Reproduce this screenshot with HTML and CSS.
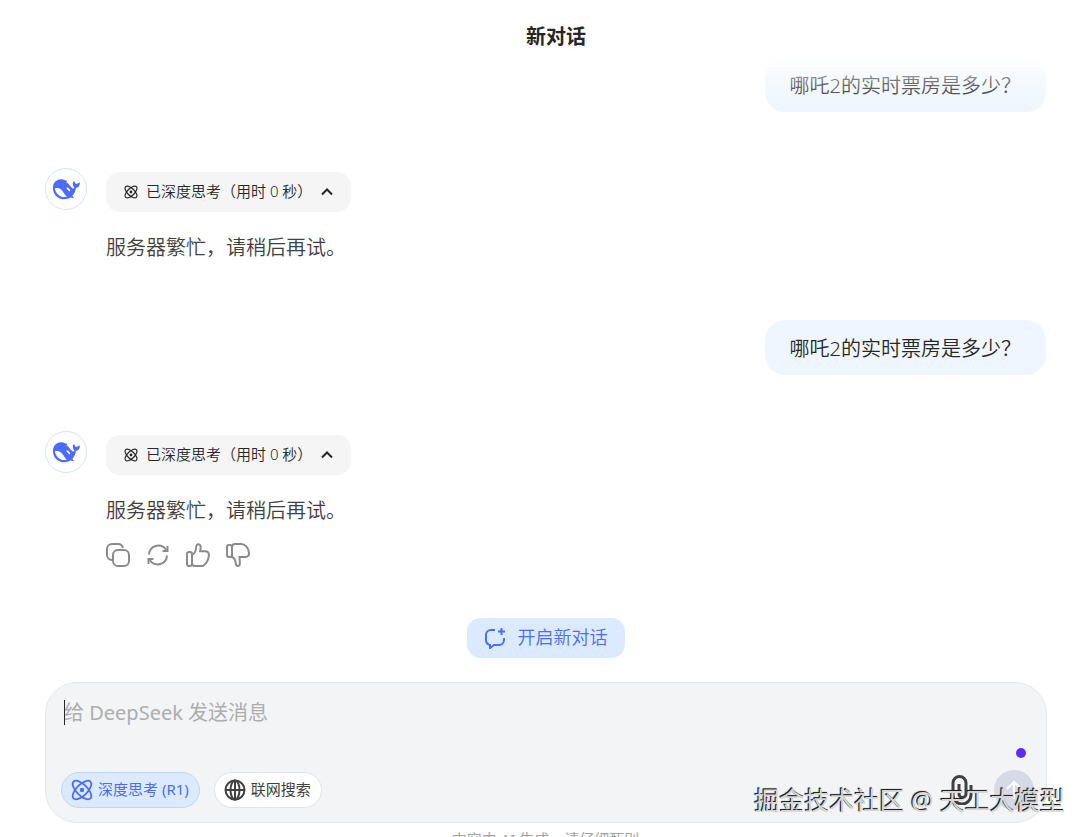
FILE: index.html
```html
<!DOCTYPE html>
<html lang="zh-CN">
<head>
<meta charset="UTF-8" />
<meta name="viewport" content="width=device-width, initial-scale=1" />
<title>新对话</title>
<link rel="stylesheet" href="styles.css">
</head>
<body>
  <!-- Shared icons -->
  <svg class="sprite" aria-hidden="true">
    <symbol id="whale" viewBox="0 0 28 24">
      <path fill="#4d6bfe" d="M13.500 3.400C8 .6 1.600 3.400 1 10c-.5 6.500 4 12 10.500 12.200 2.700.1 5-.5 6.800-1.600 1.300.5 2.700.6 3.600.2.200-.6-.9-1.100-1.600-1.900 2-2.100 3.300-4.700 3.600-7.900 2.400-.3 3.800-2.300 4-5 0-.6-.5-.7-1-.3-.9.700-2 .7-3 1.200-.8-.6-1.200-1.400-1.400-2.300-.2-.6-.8-.6-.9 0-.7 1.300-1.100 1.700-.6 3.400.2 1.100.7 1.900 1.400 2.500-.5.900-1.200 1.100-1.900.7-2.200-1.100-2.800-3.500-5-5.100-.8-.6-1.600-.7-.4-1.900-.6-.9-.9-1-1.600-.8z"/>
      <path fill="#fff" d="M3 11.300c3.300-.9 6.200.7 8.200 3.800 1.100 1.800 2 3.100 3.600 4.300-2.800 1.200-5.900.6-8.200-1.500C4.300 16.200 3 13.800 3 11.300zM14.300 10.600c1.900-.5 3.600 1 3.900 3 .1.700-.7.900-1.300.4-1-.7-2.200-1.700-2.600-3.400z"/>
    </symbol>
    <symbol id="atom" viewBox="0 0 24 24">
      <g fill="none" stroke="currentColor" stroke-width="2">
        <ellipse cx="12" cy="12" rx="13" ry="6" transform="rotate(45 12 12)"/>
        <ellipse cx="12" cy="12" rx="13" ry="6" transform="rotate(-45 12 12)"/>
      </g>
      <circle cx="12" cy="12" r="2.400" fill="currentColor"/>
    </symbol>
    <symbol id="chevron" viewBox="0 0 12 12">
      <path d="M1 8.500 6 3.500l5 5" fill="none" stroke="currentColor" stroke-width="2"/>
    </symbol>
  </svg>

  <header>
    <h1>新对话</h1>
  </header>

  <main class="chat">
    <div class="question">哪吒2的实时票房是多少？</div>

    <div class="reply">
      <div class="avatar"><svg><use href="#whale"/></svg></div>
      <div class="reply-body">
        <button class="think"><svg class="atom"><use href="#atom"/></svg><span>已深度思考（用时 0 秒）</span><svg class="chevron"><use href="#chevron"/></svg></button>
        <p>服务器繁忙，请稍后再试。</p>
      </div>
    </div>

    <div class="question">哪吒2的实时票房是多少？</div>

    <div class="reply">
      <div class="avatar"><svg><use href="#whale"/></svg></div>
      <div class="reply-body">
        <button class="think"><svg class="atom"><use href="#atom"/></svg><span>已深度思考（用时 0 秒）</span><svg class="chevron"><use href="#chevron"/></svg></button>
        <p>服务器繁忙，请稍后再试。</p>
        <div class="actions">
          <button aria-label="复制">
            <svg viewBox="0 0 24 24"><rect x="7" y="7" width="16" height="16" rx="5"/><path d="M7 17H6a5 5 0 0 1-5-5V6a5 5 0 0 1 5-5h6a5 5 0 0 1 4.900 4"/></svg>
          </button>
          <button aria-label="重新生成">
            <svg viewBox="0 0 24 24"><path d="M3 11.500a9.300 9.300 0 0 1 17-4.800M21 12.500a9.300 9.300 0 0 1-17 4.800M21.500 3v5h-5M2.500 21v-5h5"/></svg>
          </button>
          <button aria-label="喜欢">
            <svg viewBox="0 0 24 24"><rect x="1" y="9" width="5" height="14" rx="2"/><path d="M6 12c2.500-1.200 3.700-3.500 4-6.500.1-2.700.7-4.300 2.300-4.300 2 0 2.600 2 2.300 4l-.5 3H19c2.600 0 4 1.600 3.900 4-.3 4.500-2.400 8.200-5.900 10.800H9c-1.800 0-3-1-3-3z"/></svg>
          </button>
          <button aria-label="不喜欢">
            <svg viewBox="0 0 24 24"><rect x="1" y="2" width="5" height="12" rx="2"/><path d="M6 4c0-1.800 1.200-3 3-3h6c4.500 0 7.500 4 8 9 .2 2.300-1.200 4-3.500 4h-6l.4 6c0 1.800-.8 3-2.100 3s-2-1.200-2.100-3c-.2-3-1.300-5-3.700-6z"/></svg>
          </button>
        </div>
      </div>
    </div>
  </main>

  <div class="new-chat-row">
    <button class="new-chat">
      <svg viewBox="0 0 22 22"><path d="M11 3H7a5 5 0 0 0-5 5v5a5 5 0 0 0 4 4.900V21l4-3h5a5 5 0 0 0 5-5v-2M17.500 1v7M14 4.500h7"/></svg>
      <span>开启新对话</span>
    </button>
  </div>

  <form class="composer">
    <span class="caret"></span>
    <textarea rows="1" aria-label="消息" placeholder="给 DeepSeek 发送消息"></textarea>
    <div class="tools">
      <button type="button" class="tool active"><svg><use href="#atom"/></svg><span>深度思考 (R1)</span></button>
      <button type="button" class="tool">
        <svg viewBox="0 0 22 22"><g fill="none" stroke="currentColor" stroke-width="2"><circle cx="11" cy="11" r="9.500"/><ellipse cx="11" cy="11" rx="4.500" ry="9.500"/><path d="M1.500 11h19M11 1.500v19"/></g></svg><span>联网搜索</span>
      </button>
      <button type="button" class="attach" aria-label="上传附件">
        <svg viewBox="0 0 24 30"><path d="M22 10v10a9 9 0 0 1-18 0V8a6.500 6.500 0 0 1 13 0v11a3 3 0 0 1-7 0V9"/></svg>
      </button>
      <button type="submit" class="send" aria-label="发送">
        <svg viewBox="0 0 20 20"><path d="M10 19V2M3 9l7-7 7 7"/></svg>
      </button>
    </div>
    <span class="dot"></span>
  </form>

  <footer>内容由 AI 生成，请仔细甄别</footer>
  <div class="watermark">掘金技术社区 @ 天工大模型</div>
</body>
</html>
```
FILE: styles.css
```css
* {
  box-sizing: border-box;
}
body {
  margin: 0;
  height: 100vh;
  overflow: hidden;
  position: relative;
  background: #fff;
  color: #404040;
  font-family: "Noto Sans", "Noto Sans CJK SC", sans-serif;
  font-size: 20px;
  font-weight: 350;
}
button, textarea {
  font-family: inherit;
  font-weight: inherit;
  border: none;
  padding: 0;
}
button {
  cursor: pointer;
}
svg {
  display: block;
  flex: none;
}
.sprite {
  position: absolute;
  width: 0;
  height: 0;
}
header {
  position: relative;
  height: 57px;
  padding: 21px 0 0 24px;
}
header::after {
  content: "";
  position: absolute;
  left: 0;
  right: 0;
  top: 57px;
  height: 54px;
  background: linear-gradient(#fff, rgba(255, 255, 255, 0.3) 50%, rgba(255, 255, 255, 0));
}
h1 {
  margin: 0;
  font-size: 20px;
  line-height: 32px;
  font-weight: 700;
  text-align: center;
  color: #262626;
}
.chat {
  padding: 0 42px 0 45px;
}
.question {
  width: fit-content;
  margin-left: auto;
  padding: 13px 25px 11px;
  border-radius: 20px;
  background: #eff6ff;
  color: #262626;
  line-height: 31px;
}
.reply {
  display: flex;
  gap: 19px;
  margin: 56px 0;
}
.reply:last-child {
  margin-bottom: 51px;
}
.avatar {
  width: 42px;
  height: 42px;
  border: 1px solid #d5e4ff;
  border-radius: 50%;
  display: flex;
  align-items: center;
  justify-content: center;
}
.avatar svg {
  width: 28px;
  height: 24px;
}
.reply-body {
  padding-top: 4px;
}
.think {
  display: flex;
  align-items: center;
  height: 40px;
  padding: 0 18px;
  border-radius: 14px;
  background: #f5f5f5;
  color: #262626;
  font-size: 15px;
}
.think span, .tool span, .new-chat span {
  padding-bottom: 4px;
}
.think .atom {
  width: 14px;
  height: 14px;
  margin-right: 8px;
}
.think .chevron {
  width: 12px;
  height: 12px;
  margin-left: 9px;
}
.reply p {
  margin: 20px 0 0;
  line-height: 32px;
}
.actions {
  display: flex;
  gap: 16px;
  margin-top: 16px;
}
.actions button {
  background: none;
}
.actions svg {
  width: 24px;
  height: 24px;
  fill: none;
  stroke: #8b8b8b;
  stroke-width: 2;
}
.new-chat-row {
  display: flex;
  justify-content: center;
  padding: 0 42px 0 45px;
  margin-bottom: 24px;
}
.new-chat {
  display: flex;
  align-items: center;
  gap: 12px;
  height: 40px;
  padding: 0 17px;
  border-radius: 14px;
  background: #dbeafe;
  color: #4d6bfe;
  font-size: 18px;
}
.new-chat svg {
  width: 22px;
  height: 22px;
  fill: none;
  stroke: #4d6bfe;
  stroke-width: 2;
}
.composer {
  position: relative;
  margin: 0 41px 0 45px;
  padding: 14px 12px 12px 15px;
  border: 1px solid #e5e7eb;
  border-radius: 32px;
  background: #f3f4f6;
}
.composer textarea {
  display: block;
  width: 100%;
  height: 32px;
  padding: 0 3px;
  background: none;
  font-size: 20px;
  font-weight: 400;
  line-height: 32px;
  resize: none;
  outline: none;
}
.composer textarea::placeholder {
  color: #adadad;
}
.caret {
  position: absolute;
  left: 18px;
  top: 17px;
  width: 1px;
  height: 25px;
  background: #262626;
}
.tools {
  display: flex;
  align-items: center;
  margin-top: 41px;
}
.tool {
  display: flex;
  align-items: center;
  gap: 5px;
  height: 36px;
  padding: 0 10px 0 9px;
  margin-right: 14px;
  border: 1px solid #e1e3e6;
  border-radius: 18px;
  background: #fff;
  color: #404040;
  font-size: 15px;
  font-weight: 400;
}
.tool svg {
  width: 22px;
  height: 22px;
}
.tool.active {
  background: #dbeafe;
  border-color: #bdd7fb;
  color: #4d6bfe;
}
.attach {
  margin-left: auto;
  margin-right: 21px;
  background: none;
}
.attach svg {
  width: 24px;
  height: 30px;
  fill: none;
  stroke: #404040;
  stroke-width: 3;
}
.send {
  width: 40px;
  height: 40px;
  border-radius: 50%;
  background: #d6dae6;
  display: flex;
  align-items: center;
  justify-content: center;
}
.send svg {
  width: 20px;
  height: 20px;
  fill: none;
  stroke: #fff;
  stroke-width: 2;
}
.dot {
  position: absolute;
  right: 20px;
  top: 65px;
  width: 10px;
  height: 10px;
  border-radius: 50%;
  background: #5c2df5;
}
footer {
  margin-top: 5px;
  padding: 0 42px 0 45px;
  text-align: center;
  font-size: 15px;
  font-weight: 400;
  line-height: 22px;
  color: #a3a3a3;
}
.watermark {
  position: absolute;
  right: 23px;
  bottom: 19px;
  font-size: 25px;
  font-weight: 400;
  line-height: 36px;
  color: #d6d6d6;
  text-shadow: -1px -1px 0 #222, -1px -1px 1px #555;
  pointer-events: none;
}
```
